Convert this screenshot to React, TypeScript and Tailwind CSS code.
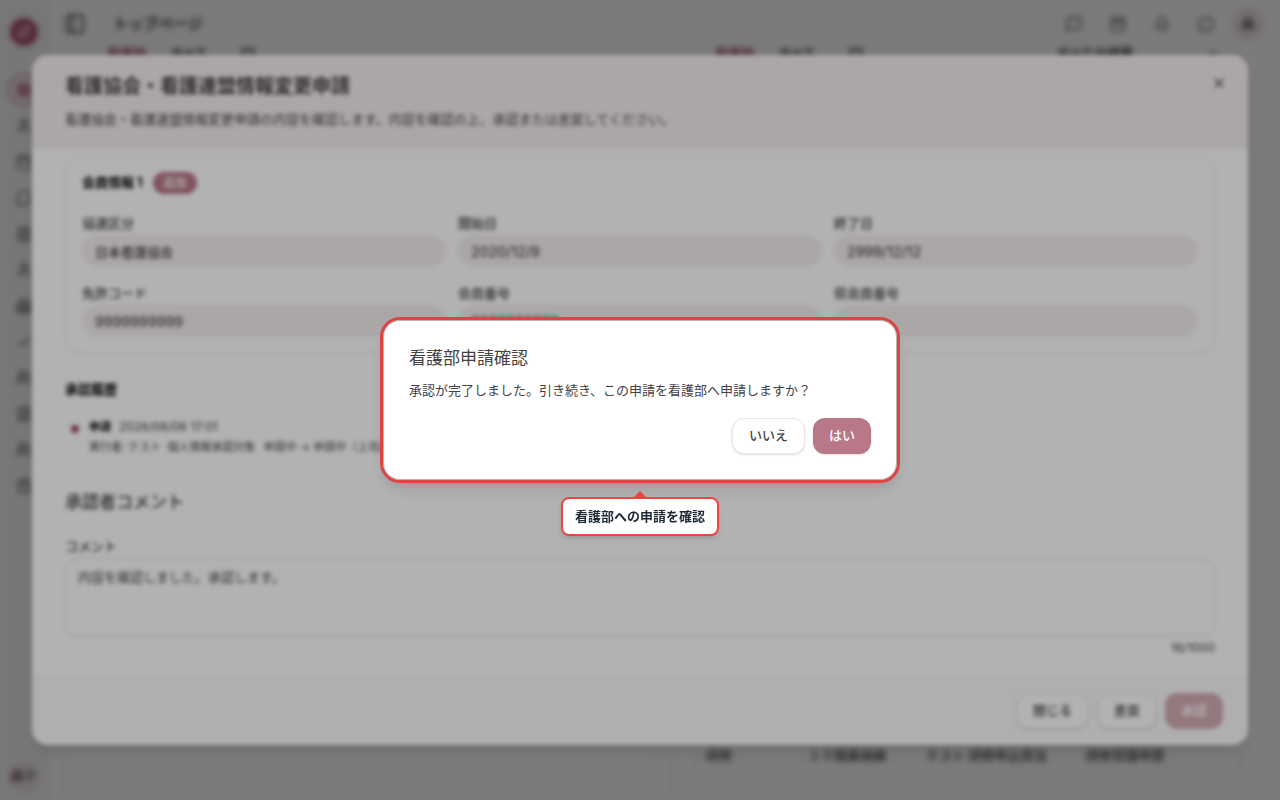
import React from 'react';
import {
  Bell,
  Building2,
  Calendar,
  Check,
  ChevronDown,
  ClipboardList,
  FileText,
  LayoutGrid,
  MessageCircle,
  MessageSquare,
  PanelLeft,
  User,
  Users,
  X,
} from 'lucide-react';

const NAV_ITEMS = [
  { id: 'profile', label: 'プロフィール', icon: User },
  { id: 'calendar', label: 'カレンダー', icon: Calendar },
  { id: 'chat', label: 'チャット', icon: MessageCircle },
  { id: 'documents', label: '書類', icon: FileText },
  { id: 'staff', label: '職員', icon: User },
  { id: 'building', label: '施設', icon: Building2 },
  { id: 'approval', label: '承認', icon: Check },
  { id: 'members', label: '会員', icon: Users },
  { id: 'reports', label: '報告', icon: FileText },
  { id: 'admin', label: '管理', icon: Users },
  { id: 'forms', label: '申請', icon: ClipboardList },
];

const HEADER_ACTIONS = [
  { id: 'calendar', label: 'カレンダー', icon: Calendar },
  { id: 'notice', label: '通知', icon: Bell },
  { id: 'chat', label: 'チャット', icon: MessageCircle },
];

const MEMBER_FIELDS = [
  { id: 'kind', label: '協連区分', value: '日本看護協会', numeric: false },
  { id: 'start', label: '開始日', value: '2020/12/9', numeric: true },
  { id: 'end', label: '終了日', value: '2999/12/12', numeric: true },
  { id: 'license', label: '免許コード', value: '9999999999', numeric: true },
  { id: 'member', label: '会員番号', value: '9999999999', numeric: true },
  { id: 'prefecture', label: '県会員番号', value: '—', numeric: false },
];

const Sidebar: React.FC = () => (
  <nav className="flex w-12 shrink-0 flex-col items-center border-r border-[#e8e4e5] bg-[#f6f5f5] pt-[18px] pb-2 text-[#4a4446]">
    <div className="flex size-7 items-center justify-center rounded-full bg-[#b0506c]">
      <svg viewBox="0 0 24 24" className="size-5" fill="none" stroke="#e9c8d1" strokeWidth="3" strokeLinecap="round">
        <path d="M6 18C6 10 11 6 18 6C18 13 13 18 6 18Z" />
      </svg>
    </div>
    <a
      href="#top"
      aria-label="トップページ"
      className="mt-7 mb-0.5 flex size-8 shrink-0 items-center justify-center rounded-full border-2 border-[#c98a9c] text-[#b0506c]"
    >
      <LayoutGrid size={16} strokeWidth={3} />
    </a>
    {NAV_ITEMS.map(({ id, label, icon: Icon }) => (
      <a key={id} href={`#${id}`} aria-label={label} className="flex h-9 w-8 items-center justify-center">
        <Icon size={16} />
      </a>
    ))}
    <div className="mt-auto flex size-8 items-center justify-center rounded-full bg-[#efe2e5] text-[13px] font-medium">
      森テ
    </div>
  </nav>
);

const PageHeader: React.FC = () => (
  <header className="flex h-12 shrink-0 items-center px-4">
    <button type="button" aria-label="メニュー" className="text-[#3f3a3c]">
      <PanelLeft size={22} />
    </button>
    <h1 className="ml-[27px] text-[15px] font-bold">トップページ</h1>
    <div className="ml-auto flex items-center gap-2 text-[#3f3a3c]">
      <button
        type="button"
        aria-label="メッセージ"
        className="flex size-9 items-center justify-center rounded-xl border border-[#ede8e9]"
      >
        <MessageSquare size={16} />
      </button>
      {HEADER_ACTIONS.map(({ id, label, icon: Icon }) => (
        <button key={id} type="button" aria-label={label} className="flex size-9 items-center justify-center">
          <Icon size={16} />
        </button>
      ))}
      <span className="flex size-8 items-center justify-center rounded-full bg-[#efe2e5] text-[13px] font-medium">森</span>
    </div>
  </header>
);

const PanelTabs: React.FC = () => (
  <div className="flex h-6 items-center pl-11 text-[13px] font-bold">
    <span className="text-[#a84a66]">看護部</span>
    <span className="ml-6">すべて</span>
    <Calendar size={16} className="ml-8" />
  </div>
);

const TopPage: React.FC = () => (
  <div className="flex h-screen overflow-hidden bg-[#fdfdfd]">
    <Sidebar />
    <div className="flex min-w-0 flex-1 flex-col">
      <PageHeader />
      <main className="-mt-1.5 flex min-h-0 flex-1 gap-4 pr-[18px] pl-3.5">
        <section className="flex-1 border-x border-[#eae6e7]">
          <PanelTabs />
        </section>
        <section className="flex flex-1 flex-col border-x border-[#eae6e7]">
          <div className="flex items-center justify-between pr-10">
            <PanelTabs />
            <div className="flex items-center gap-[72px] text-[13px] font-bold">
              すべての部署
              <ChevronDown size={16} />
            </div>
          </div>
          <div className="mr-5 mb-5 ml-6 flex flex-1 flex-col justify-end rounded-2xl border border-[#e6e1e2] pb-3.5 pl-2.5">
            <table className="w-full table-fixed text-left text-[13px] leading-5 font-medium">
              <tbody>
                <tr>
                  <td className="w-[102px]">研修</td>
                  <td className="w-[118px]">１０階東病棟</td>
                  <td className="w-40">テスト 研修申込担当</td>
                  <td>研修受講申請</td>
                </tr>
              </tbody>
            </table>
          </div>
        </section>
      </main>
    </div>
  </div>
);

const MemberCard: React.FC = () => (
  <section className="rounded-2xl border border-[#e9e5e6] p-4">
    <div className="flex h-[22px] items-center gap-2.5">
      <h3 className="text-[13px] font-bold text-black">会員情報 1</h3>
      <span className="rounded-full bg-[#b87888] px-2.5 text-[12px] leading-[22px] font-medium text-white">追加</span>
    </div>
    <div className="mt-[19px] grid grid-cols-3 gap-x-3 gap-y-4">
      {MEMBER_FIELDS.map((field) => (
        <div key={field.id} className="flex flex-col gap-0.5">
          <label htmlFor={field.id} className="text-[13px] leading-5 font-medium">
            {field.label}
          </label>
          <input
            id={field.id}
            readOnly
            value={field.value}
            className={`h-8 w-full rounded-2xl bg-[#f5eff0] px-[13px] font-medium ${field.numeric ? 'text-[14px]' : 'text-[13px]'}`}
          />
        </div>
      ))}
    </div>
  </section>
);

const ApprovalHistory: React.FC = () => (
  <section className="mt-[25px]">
    <h3 className="text-[13px] leading-5 font-bold text-black">承認履歴</h3>
    <div className="mt-[18px] flex gap-2.5 pl-1.5">
      <span className="mt-2 size-2 shrink-0 rounded-full bg-[#a84a66]" />
      <div>
        <p className="flex gap-2 text-[12px] leading-5">
          <strong className="text-[11px] text-black">申請</strong>
          <span>2026/08/06 17:01</span>
        </p>
        <p className="flex gap-2 text-[11px] leading-5">
          <span className="whitespace-pre">実行者: テスト  個人情報承認対象</span>
          <span>申請中 → 申請中（上司承認待ち）</span>
        </p>
      </div>
    </div>
  </section>
);

const RequestDialog: React.FC = () => (
  <div className="fixed inset-0 flex items-center justify-center bg-black/30 px-8 backdrop-blur-[2px]">
    <div role="dialog" aria-labelledby="request-title" className="w-full overflow-hidden rounded-2xl bg-white shadow-lg">
      <header className="flex items-start justify-between bg-[#f5eff0] pt-5 pr-[21px] pb-5 pl-[33px]">
        <div>
          <h2 id="request-title" className="text-[19px] leading-6 font-semibold">
            看護協会・看護連盟情報変更申請
          </h2>
          <p className="mt-2.5 text-[13px] leading-5">
            看護協会・看護連盟情報変更申請の内容を確認します。内容を確認の上、承認または差戻してください。
          </p>
        </div>
        <button type="button" aria-label="閉じる">
          <X size={16} />
        </button>
      </header>
      <div className="px-[33px] pt-1.5 pb-[18px]">
        <MemberCard />
        <ApprovalHistory />
        <section className="mt-[33px]">
          <h3 className="text-[17px] leading-6 font-medium">承認者コメント</h3>
          <label htmlFor="comment" className="mt-[22px] block text-[13px] leading-5 font-medium">
            コメント
          </label>
          <textarea
            id="comment"
            defaultValue="内容を確認しました。承認します。"
            className="mt-0.5 block h-[78px] w-full resize-none rounded-xl border border-[#e4dfe0] px-3 py-2 text-[13px] leading-5 shadow-xs"
          />
          <p className="mt-0.5 text-right text-[12px] leading-5">16/1000</p>
        </section>
      </div>
      <footer className="flex justify-end gap-2 border-t border-[#efecec] bg-[#fcfbfb] py-4 pr-[25px] text-[13px] font-medium">
        <button type="button" className="h-9 rounded-xl border border-[#e4dde0] bg-white px-4 shadow-sm">
          閉じる
        </button>
        <button type="button" className="h-9 rounded-xl border border-[#e4dde0] bg-white px-4 shadow-sm">
          差戻
        </button>
        <button type="button" disabled className="h-9 rounded-xl bg-[#b87888] px-4 text-white opacity-60">
          承認
        </button>
      </footer>
    </div>
  </div>
);

const ConfirmDialog: React.FC = () => (
  <div className="fixed inset-0 flex items-center justify-center bg-black/30 backdrop-blur-[2px]">
    <div className="relative w-full max-w-[520px] rounded-[20px] border-3 border-[#de4444] shadow-lg">
      <div
        role="alertdialog"
        aria-labelledby="confirm-title"
        aria-describedby="confirm-text"
        className="rounded-[17px] border border-[#b8b4b5] bg-white p-[25px]"
      >
        <h2 id="confirm-title" className="text-[17px] leading-6">
          看護部申請確認
        </h2>
        <p id="confirm-text" className="mt-2.5 text-[13px] leading-5">
          承認が完了しました。引き続き、この申請を看護部へ申請しますか？
        </p>
        <div className="mt-[18px] flex justify-end gap-2 text-[13px] font-medium">
          <button type="button" className="h-9 rounded-xl border border-[#eee3e6] bg-white px-4 shadow-sm">
            いいえ
          </button>
          <button type="button" className="h-9 rounded-xl bg-[#b87888] px-4 text-white shadow-sm">
            はい
          </button>
        </div>
      </div>
      <div
        role="tooltip"
        className="absolute top-full left-1/2 mt-[17px] -translate-x-1/2 rounded-lg border-2 border-[#ef4444] bg-white px-3 py-2 text-[13px] leading-[19px] font-bold whitespace-nowrap text-[#1f2937] shadow-md"
      >
        <svg viewBox="0 0 12 6" className="absolute -top-2 left-1/2 h-1.5 w-3 -translate-x-1/2" fill="#ef4444">
          <path d="M6 0L12 6H0Z" />
        </svg>
        看護部への申請を確認
      </div>
    </div>
  </div>
);

const App: React.FC = () => {
  return (
    <div lang="ja" className="font-['Inter','Noto_Sans_CJK_JP',sans-serif] text-[#464143]">
      <TopPage />
      <RequestDialog />
      <ConfirmDialog />
    </div>
  );
};

export default App;
